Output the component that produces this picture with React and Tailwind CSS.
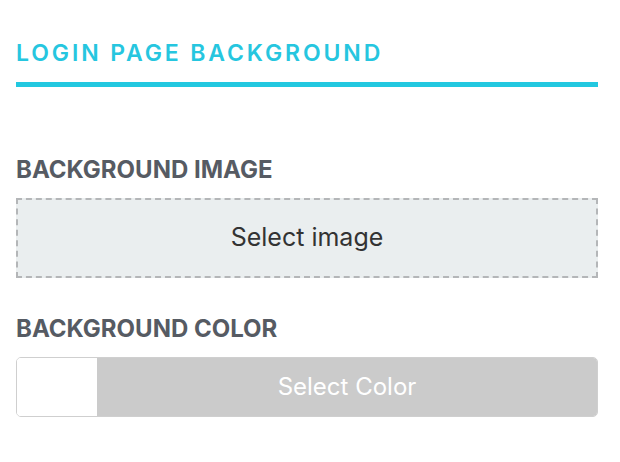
import React from "react";

export default function App() {
  return (
    <div className="min-h-screen bg-white pl-4 pr-[22px] pt-[39px]" style={{ fontFamily: "Inter, 'Liberation Sans', sans-serif" }}>
      <div className="border-b-[5px] border-[#22c8e0] pb-[15px]">
        <h2 className="text-[23px] font-semibold uppercase leading-[28px] tracking-[0.125em] text-[#26c6df]">
          Login Page Background
        </h2>
      </div>

      <div className="mt-[69px]">
        <div className="text-[24px] font-bold uppercase leading-[28px] text-[#565b63]">Background Image</div>
        <button className="mt-[14px] flex h-[80px] w-full items-center justify-center border-2 border-dashed border-[#b4b6b8] bg-[#eaeeef] text-[25px] text-[#333]">
          Select image
        </button>
      </div>

      <div className="mt-[37px]">
        <div className="text-[24px] font-bold uppercase leading-[28px] text-[#565b63]">Background Color</div>
        <div className="mt-[14px] flex h-[60px] w-full overflow-hidden rounded-[5px] border border-[#cfcfcf]">
          <div className="w-[80px] bg-white" />
          <button className="flex flex-1 items-center justify-center bg-[#cbcbcb] text-[24px] text-white">
            Select Color
          </button>
        </div>
      </div>
    </div>
  );
}
